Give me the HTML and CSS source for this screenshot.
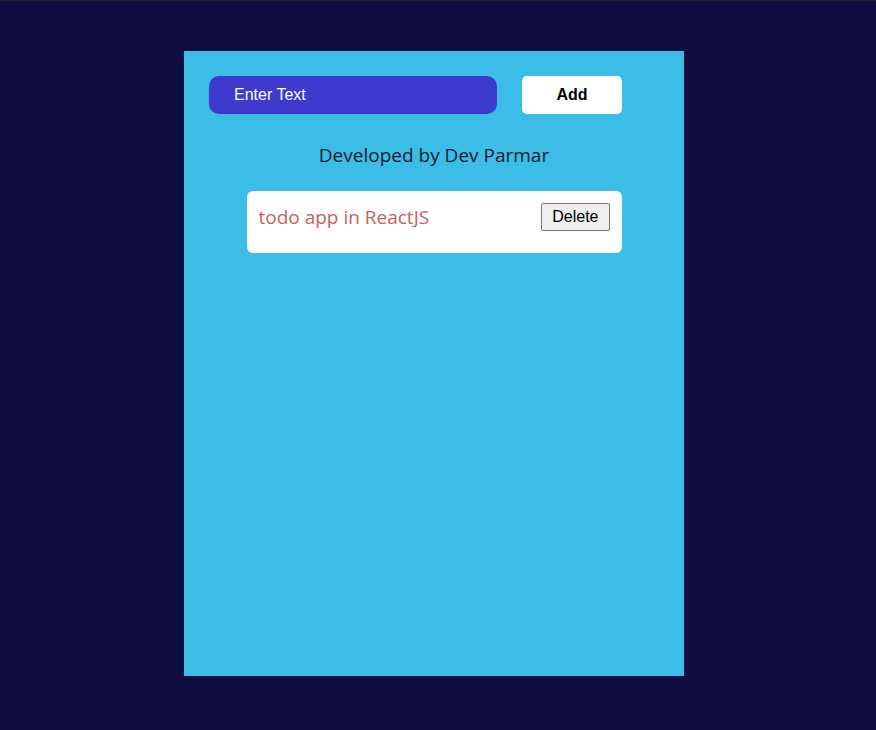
FILE: index.html
```html
<!DOCTYPE html>
<html>
<head>
<meta charset="utf-8">
<link rel="stylesheet" href="styles.css">
</head>
<body>
<div class="card">
  <div class="form">
    <div class="input">Enter Text</div>
    <button class="add">Add</button>
  </div>
  <p class="credit">Developed by Dev Parmar</p>
  <div class="todo">
    <span class="todo-text">todo app in ReactJS</span>
    <button class="delete">Delete</button>
  </div>
</div>
</body>
</html>
```

FILE: styles.css
```css
html, body {
  margin: 0;
  padding: 0;
  background: #100d40;
  height: 100%;
}
body {
  border-top: 1px solid #222228;
  box-sizing: border-box;
  font-family: "Open Sans", "Noto Sans", sans-serif;
}
.card {
  margin: 50px 0 0 184px;
  width: 500px;
  height: 625px;
  box-sizing: border-box;
  padding: 25px;
  background: #3bbde8;
}
.form {
  display: flex;
  gap: 25px;
}
.input {
  width: 288px;
  height: 38px;
  box-sizing: border-box;
  background: #3d3acd;
  border-radius: 10px;
  color: #ffffff;
  font-family: "Liberation Sans", Arial, sans-serif;
  font-size: 16px;
  line-height: 38px;
  padding-left: 25px;
}
.add {
  width: 100px;
  height: 38px;
  border: none;
  border-radius: 5px;
  background: #ffffff;
  color: #000;
  font-family: "Liberation Sans", Arial, sans-serif;
  font-weight: bold;
  font-size: 16px;
  padding: 0;
}
.credit {
  margin: 29px 0 0;
  text-align: center;
  font-size: 19px;
  line-height: 24px;
  color: #0d1a2a;
}
.todo {
  width: 375px;
  height: 62px;
  box-sizing: border-box;
  margin: 24px auto 0;
  padding: 12px;
  background: #ffffff;
  border-radius: 6px;
  display: flex;
  justify-content: space-between;
  align-items: flex-start;
}
.todo-text {
  color: #c96158;
  font-size: 19px;
  line-height: 29px;
}
.delete {
  font-family: "Liberation Sans", Arial, sans-serif;
  font-size: 16px;
  height: 28px;
  padding: 0 10px;
  background: #efefef;
  border: 1px solid #767676;
  border-radius: 2px;
  color: #000;
}
```
